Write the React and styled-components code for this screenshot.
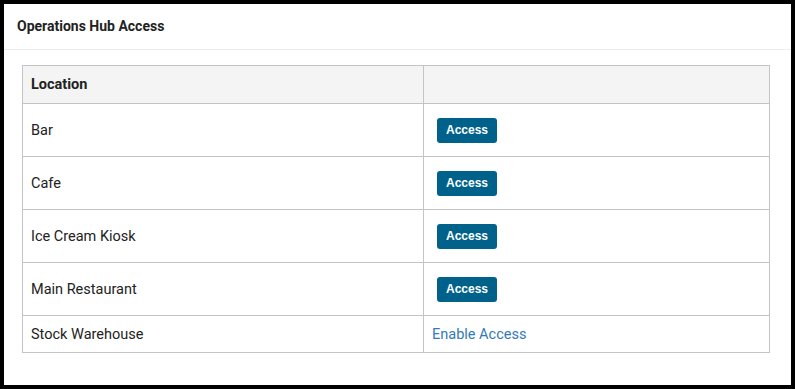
import React from 'react';
import styled, { createGlobalStyle } from 'styled-components';

const GlobalStyle = createGlobalStyle`
  html, body {
    margin: 0;
    padding: 0;
    background: #000;
  }
  body {
    font-family: Roboto, 'Liberation Sans', sans-serif;
    color: #222;
  }
  * {
    box-sizing: border-box;
  }
`;

const Card = styled.div`
  margin: 4px;
  height: 381px;
  background: #fff;
`;

const CardHeader = styled.div`
  height: 46px;
  padding: 0 13px 2px;
  display: flex;
  align-items: center;
  border-bottom: 1px solid #ececec;
  font-size: 14px;
  font-weight: 700;
  color: #222;
`;

const CardBody = styled.div`
  padding: 15px 21px 0 18px;
`;

const Table = styled.table`
  width: 100%;
  border-collapse: collapse;
  font-size: 14.5px;
  color: #222;
`;

const HeadCell = styled.th`
  text-align: left;
  font-weight: 700;
  background: #f4f4f4;
  border: 1px solid #c4c4c4;
  padding: 8px 8px;
  height: 38px;
  width: ${p => p.$width || 'auto'};
`;

const Cell = styled.td`
  border: 1px solid #c4c4c4;
  padding: 8px 8px;
  height: ${p => (p.$tall ? '53px' : '37px')};
  vertical-align: middle;
`;

const AccessButton = styled.button`
  display: block;
  height: 25px;
  margin: 0 0 0 5px;
  padding: 0 9px;
  border: none;
  border-radius: 3px;
  background: #00628b;
  color: #fff;
  font-family: 'Liberation Sans', Arial, sans-serif;
  font-size: 12px;
  font-weight: 700;
  cursor: pointer;
`;

const EnableLink = styled.a`
  color: #337ab7;
  text-decoration: none;
  cursor: pointer;
`;

const locations = [
  { name: 'Bar', enabled: true },
  { name: 'Cafe', enabled: true },
  { name: 'Ice Cream Kiosk', enabled: true },
  { name: 'Main Restaurant', enabled: true },
  { name: 'Stock Warehouse', enabled: false },
];

export default function App() {
  return (
    <>
      <GlobalStyle />
      <Card>
        <CardHeader>Operations Hub Access</CardHeader>
        <CardBody>
          <Table>
            <thead>
              <tr>
                <HeadCell $width="401px">Location</HeadCell>
                <HeadCell />
              </tr>
            </thead>
            <tbody>
              {locations.map(loc => (
                <tr key={loc.name}>
                  <Cell $tall={loc.enabled}>{loc.name}</Cell>
                  <Cell $tall={loc.enabled}>
                    {loc.enabled ? (
                      <AccessButton>Access</AccessButton>
                    ) : (
                      <EnableLink>Enable Access</EnableLink>
                    )}
                  </Cell>
                </tr>
              ))}
            </tbody>
          </Table>
        </CardBody>
      </Card>
    </>
  );
}
